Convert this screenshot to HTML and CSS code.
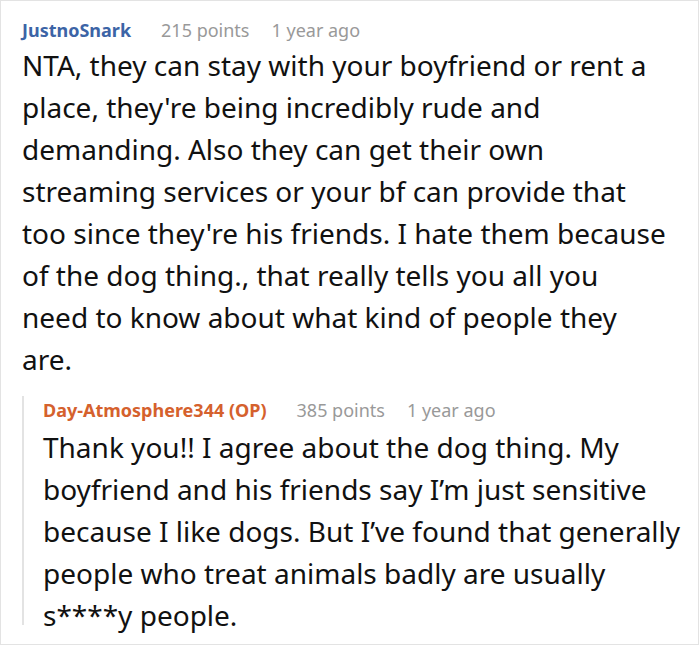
FILE: index.html
```html
<!DOCTYPE html>
<html>
<head>
<meta charset="utf-8">
<link rel="stylesheet" href="styles.css">
</head>
<body>
<div class="thread">
  <div class="comment">
    <div class="meta">
      <span class="user">JustnoSnark</span>
      <span class="points">215 points</span>
      <span class="time">1 year ago</span>
    </div>
    <p class="text main-text">NTA, they can stay with your boyfriend or rent a place, they're being incredibly rude and demanding. Also they can get their own streaming services or your bf can provide that too since they're his friends. I hate them because of the dog thing., that really tells you all you need to know about what kind of people they are.</p>
    <div class="reply">
      <div class="meta">
        <span class="user op">Day-Atmosphere344 (OP)</span>
        <span class="points">385 points</span>
        <span class="time">1 year ago</span>
      </div>
      <p class="text reply-text">Thank you!! I agree about the dog thing. My boyfriend and his friends say I’m just sensitive because I like dogs. But I’ve found that generally people who treat animals badly are usually s****y people.</p>
    </div>
  </div>
</div>
</body>
</html>
```

FILE: styles.css
```css
html, body {
  margin: 0;
  padding: 0;
  background: #fff;
}
.thread {
  width: 699px;
  height: 645px;
  box-sizing: border-box;
  border: 1px solid #e3e3e3;
  font-family: "Noto Sans", sans-serif;
  color: #111;
  padding: 15px 10px 0 21px;
  overflow: hidden;
}
.meta {
  font-size: 18px;
  line-height: 28px;
  color: #999;
  display: flex;
}
.user {
  font-weight: bold;
  color: #3c64a6;
  margin-right: 30px;
}
.user.op {
  color: #d5612d;
}
.points {
  margin-right: 22px;
}
.text {
  margin: 0;
  font-size: 28px;
  line-height: 42px;
}
.main-text {
  padding-right: 22px;
}
.reply {
  margin-top: 16px;
  border-left: 2px solid #e3e3e3;
  padding-left: 19px;
  padding-bottom: 1px;
}
.reply .meta {
  margin-bottom: 2px;
}
.reply-text {
  margin-bottom: -12px;
}
```
